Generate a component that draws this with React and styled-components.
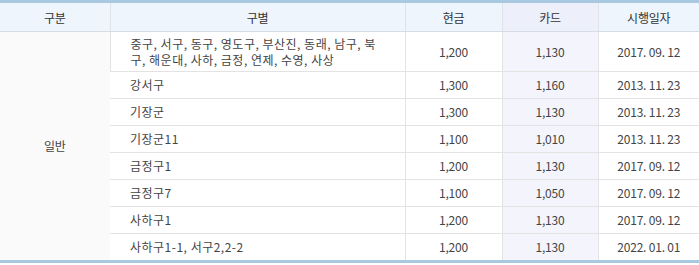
import React from "react";
import styled, { createGlobalStyle } from "styled-components";

const Global = createGlobalStyle`
  html, body { margin: 0; padding: 0; background: #fff; }
  body { font-family: "Noto Sans CJK KR", "Noto Sans", sans-serif; }
`;

const Table = styled.table`
  width: 699px;
  border-collapse: collapse;
  table-layout: fixed;
  border-top: 3px solid #a9c9e1;
  border-bottom: 3px solid #a9c9e1;
  font-size: 12px;
  color: #444;
  letter-spacing: -0.2px;
`;

const Th = styled.th`
  height: 28px;
  padding: 0;
  font-weight: normal;
  color: #333;
  background: ${(p) => (p.$card ? "#edf0fa" : "#eef5fc")};
  border-bottom: 1px solid #d6dde4;
  border-left: 1px solid #dfe3e8;
  &:first-child { border-left: none; }
  text-align: center;
`;

const Td = styled.td`
  height: ${(p) => (p.$tall ? "39px" : "26px")};
  padding: ${(p) => (p.$left ? "0 18px 0 20px" : "0")};
  text-align: ${(p) => (p.$left ? "left" : "center")};
  letter-spacing: ${(p) => (p.$left ? "0.5px" : "-0.2px")};
  word-break: break-all;
  line-height: 16px;
  background: ${(p) => (p.$card ? "#f4f4fc" : p.$group ? "#fafafa" : "#fff")};
  border-bottom: 1px solid #e3e3e3;
  border-left: 1px solid #e3e3e3;
  &:first-child { border-left: none; }
`;

const rows = [
  ["중구, 서구, 동구, 영도구, 부산진, 동래, 남구, 북구, 해운대, 사하, 금정, 연제, 수영, 사상", "1,200", "1,130", "2017. 09. 12"],
  ["강서구", "1,300", "1,160", "2013. 11. 23"],
  ["기장군", "1,300", "1,130", "2013. 11. 23"],
  ["기장군11", "1,100", "1,010", "2013. 11. 23"],
  ["금정구1", "1,200", "1,130", "2017. 09. 12"],
  ["금정구7", "1,100", "1,050", "2017. 09. 12"],
  ["사하구1", "1,200", "1,130", "2017. 09. 12"],
  ["사하구1-1, 서구2,2-2", "1,200", "1,130", "2022. 01. 01"],
];

export default function App() {
  return (
    <>
      <Global />
      <Table>
        <colgroup>
          <col style={{ width: 110 }} />
          <col style={{ width: 295 }} />
          <col style={{ width: 97 }} />
          <col style={{ width: 96 }} />
          <col style={{ width: 101 }} />
        </colgroup>
        <thead>
          <tr>
            <Th>구분</Th>
            <Th>구별</Th>
            <Th>현금</Th>
            <Th $card>카드</Th>
            <Th>시행일자</Th>
          </tr>
        </thead>
        <tbody>
          {rows.map((r, i) => (
            <tr key={i}>
              {i === 0 && (
                <Td $group rowSpan={rows.length}>
                  일반
                </Td>
              )}
              <Td $left $tall={i === 0}>{r[0]}</Td>
              <Td>{r[1]}</Td>
              <Td $card>{r[2]}</Td>
              <Td>{r[3]}</Td>
            </tr>
          ))}
        </tbody>
      </Table>
    </>
  );
}
